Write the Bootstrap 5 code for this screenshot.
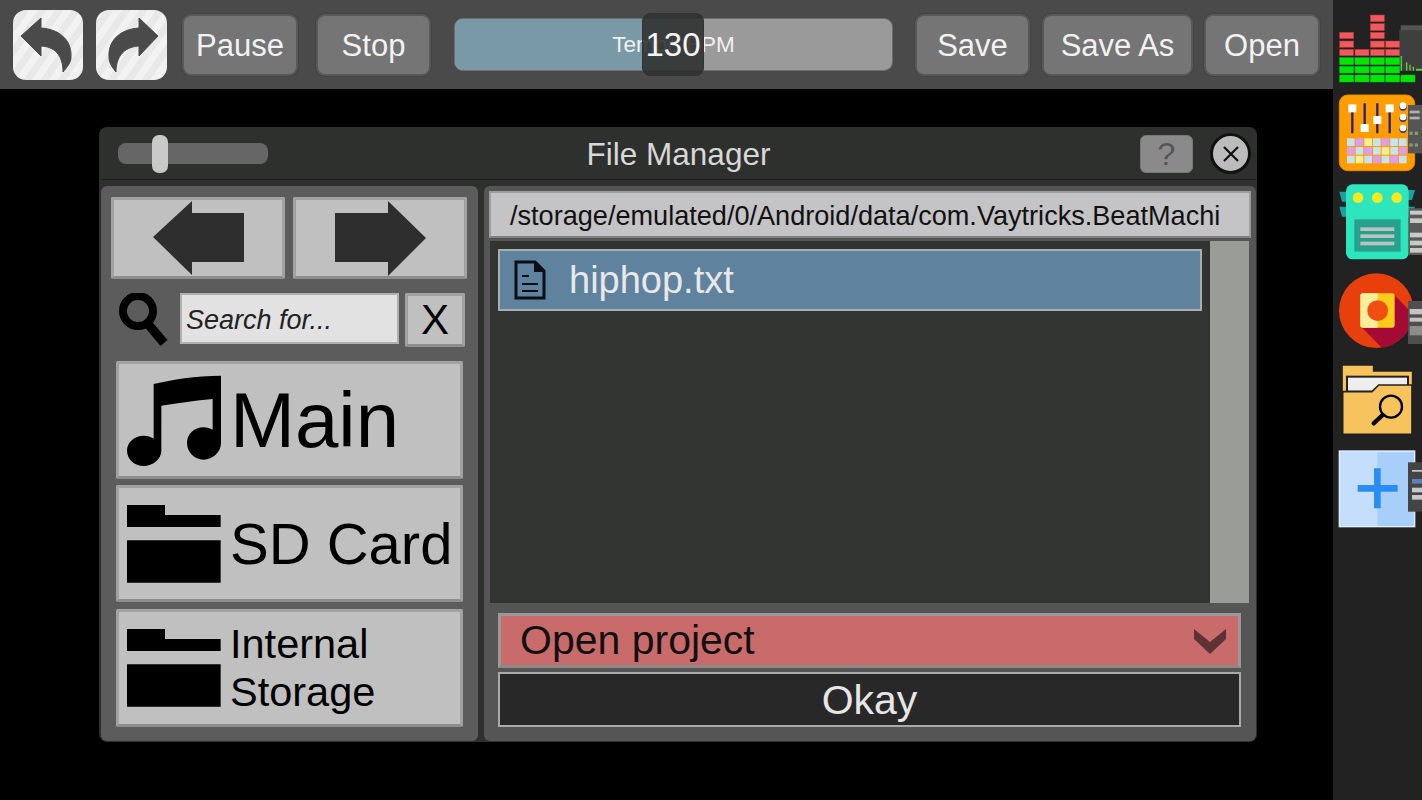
<!DOCTYPE html>
<html lang="en">
<head>
  <meta charset="UTF-8">
  <title>File Manager</title>
  <meta name="viewport" content="width=device-width, initial-scale=1" />
  <link href="https://cdn.jsdelivr.net/npm/bootstrap@5.3.2/dist/css/bootstrap.min.css" rel="stylesheet">
  <style>
    html, body { height: 100%; }
    body { background: #000; font-family: "Liberation Sans", Arial, sans-serif; overflow: hidden; }
    svg { display: block; flex: none; }

    /* top toolbar */
    .app-main { width: 1333px; }
    .toolbar { height: 89px; background: #4a4a4a; padding-left: 13px; }
    .img-btn { width: 70px; height: 70px; padding: 0; border: 0; border-radius: 13px; background: repeating-linear-gradient(-55deg, #e9e9e9 0 7px, #f2f2f2 7px 14px); }
    .img-btn:hover, .img-btn:active { background: repeating-linear-gradient(-55deg, #e9e9e9 0 7px, #f2f2f2 7px 14px) !important; }
    .tool-btn { height: 62px; padding: 2px 0 0; font-size: 31px; line-height: 1; color: #f2f2f2; background: #757575; border: 2px solid #585858; border-radius: 9px; box-shadow: 0 0 0 1px #444; }
    .tool-btn:hover { color: #f2f2f2; background: #757575; border-color: #585858; }
    .w-pause { width: 116px; margin-left: 15px; }
    .w-stop { width: 115px; margin-left: 18px; }
    .w-save { width: 115px; margin-left: 22px; }
    .w-saveas { width: 151px; margin-left: 12px; }
    .w-open { width: 116px; margin-left: 11px; }
    .w-redo { margin-left: 13px; width: 71px; }
    .tempo { width: 439px; height: 53px; margin-left: 23px; background: #9a9a9a; border-radius: 9px; border: 1px solid #6e6e6e; font-size: 22.5px; color: #f0f0f0; }
    .tempo-fill { background: #7899a5; border-radius: 8px 0 0 8px; }
    .tempo-label { z-index: 1; }
    .tempo-thumb { left: 187px; top: -6px; width: 62px; height: 63px; z-index: 2; background: rgba(48, 50, 50, .9); border: 1px solid #333; border-radius: 8px; font-size: 33px; color: #f4f4f4; }

    /* side dock */
    .dock { width: 89px; background: #222; }

    /* dialog */
    .fm-dialog { width: 1158px; height: 615px; margin: 38px 0 0 99px; padding: 0 1px 1px 2px; background: #2e302e; border-radius: 8px; }
    .fm-title { display: grid; grid-template-columns: 1fr auto 1fr; height: 53px; padding: 0 17px; color: #d8d8d8; font-size: 31.5px; border-bottom: 1px solid #222; }
    .fm-title-text { padding-top: 4px; }
    .title-tools { margin: 1px -12px 0 0; gap: 17px; }
    .size-track { width: 150px; height: 21px; background: #666; border-radius: 8px; }
    .size-thumb { left: 34px; top: -8px; width: 16px; height: 38px; background: #c9c9c9; border-radius: 7px; }
    .help-btn { width: 53px; height: 38px; padding: 0; background: #8a8a8a; border: 1px solid #777; border-radius: 6px; color: #555; font-size: 32px; line-height: 1; }
    .close-btn { width: 41px; height: 41px; padding: 0; background: #bcbcbc; border: 3px solid #111; border-radius: 50%; }
    .fm-body { gap: 6px; margin-top: 6px; height: 555px; }
    .pane-left { width: 377px; background: #5c5c5c; border-radius: 6px; padding: 11px 10px 0; }
    .pane-right { width: 772px; background: #555; border-radius: 6px; padding: 5px; }
    .grey-btn { padding: 0; background: #c0c0c0; border: 3px solid #a2a2a2; border-bottom-color: #8e8e8e; border-radius: 2px; color: #000; }
    .grey-btn:hover { background: #c0c0c0; border-color: #a2a2a2; color: #000; }
    .nav-btn { width: 174px; height: 82px; }
    .search-row { margin: 14px 0 14px 8px; height: 54px; }
    .search-input { width: 219px; height: 51px; margin-left: 12px; padding: 4px 4px 0; background: #e2e2e2; border: 2px solid #b0b0b0; border-radius: 0; font-size: 27px; font-style: italic; color: #222; }
    .search-input::placeholder { color: #222; opacity: 1; }
    .clear-btn { width: 60px; height: 54px; margin-left: 6px; font-size: 42px; line-height: 1; }
    .place-list { margin-left: 5px; width: 347px; }
    .place-btn { width: 347px; height: 118px; padding-left: 8px; gap: 9px; text-align: left; }
    .place-sd { height: 117px; margin: 6px 0 7px; font-size: 58px; }
    .place-main { font-size: 78px; }
    .place-int { font-size: 41.5px; line-height: 48px; }
    .path-bar { height: 47px; padding: 1px 19px 0; background: #c4c3c6; border: 2px solid #9e9e9e; border-bottom-color: #808080; font-size: 27.1px; line-height: 43px; color: #111; white-space: nowrap; overflow: hidden; }
    .file-pane { width: 759px; height: 362px; margin: 3px 0 0 1px; background: #323432; }
    .file-col { width: 720px; padding: 8px 8px 0; }
    .list-group-item.file-row { height: 62px; padding: 0 0 0 14px; gap: 23px; background: #5f829e; border: 2px solid #a9aeb0; border-radius: 0; color: #e8e8e8; font-size: 38px; }
    .file-scroll { width: 39px; background: #9a9c98; }
    .mode-select { width: 743px; height: 55px; margin: 10px 0 0 9px; padding: 1px 12px 0 19px; background: #c96b6b; border: 3px solid #999; border-bottom-color: #8f8888; font-size: 41px; color: #111; }
    .okay-btn { width: 743px; height: 55px; margin: 4px 0 0 9px; padding: 2px 0 0; background: #282828; border: 2px solid #aaa; border-radius: 0; font-size: 41px; line-height: 1; color: #e6e6e6; }
    .okay-btn:hover { background: #282828; border-color: #aaa; color: #e6e6e6; }
  </style>
</head>
<body>
  <div class="d-flex vh-100">
    <div class="app-main flex-shrink-0">
      <!-- toolbar -->
      <div class="toolbar d-flex align-items-center">
        <button type="button" class="btn img-btn" aria-label="Undo">
          <svg width="70" height="70" viewBox="13 9 70 70"><path fill="#4a4a4a" stroke="#4a4a4a" stroke-linejoin="round" d="M21 35 41 17V27C58 28 72 38 71 56 71 62 67 66 63 71 63 58 58 46 41 45V55Z"/></svg>
        </button>
        <button type="button" class="btn img-btn w-redo" aria-label="Redo">
          <svg width="71" height="70" viewBox="96 9 71 70"><path fill="#4a4a4a" stroke="#4a4a4a" stroke-linejoin="round" d="M158 35 139 17V27C122 28 108 38 109 56 109 62 112 66 116 71 116 58 122 46 139 45V55Z"/></svg>
        </button>
        <button type="button" class="btn tool-btn w-pause">Pause</button>
        <button type="button" class="btn tool-btn w-stop">Stop</button>
        <div class="tempo position-relative d-flex">
          <div class="tempo-fill h-100" style="width: 49%"></div>
          <div class="tempo-label position-absolute top-0 start-0 w-100 h-100 d-flex align-items-center justify-content-center">Tempo BPM</div>
          <div class="tempo-thumb position-absolute d-flex align-items-center justify-content-center">130</div>
        </div>
        <button type="button" class="btn tool-btn w-save">Save</button>
        <button type="button" class="btn tool-btn w-saveas">Save As</button>
        <button type="button" class="btn tool-btn w-open">Open</button>
      </div>

      <!-- file manager -->
      <div class="fm-dialog">
        <div class="fm-title align-items-center">
          <div class="size-track position-relative"><div class="size-thumb position-absolute"></div></div>
          <div class="fm-title-text">File Manager</div>
          <div class="title-tools d-flex justify-content-end align-items-center">
            <button type="button" class="btn help-btn">?</button>
            <button type="button" class="btn close-btn d-flex align-items-center justify-content-center" aria-label="Close">
              <svg width="20" height="20" viewBox="0 0 20 20"><path d="M3 3 17 17M17 3 3 17" stroke="#111" stroke-width="2.2"/></svg>
            </button>
          </div>
        </div>
        <div class="fm-body d-flex">
          <div class="pane-left">
            <div class="d-flex gap-2">
              <button type="button" class="btn grey-btn nav-btn d-flex align-items-center justify-content-center" aria-label="Back">
                <svg width="91" height="75" viewBox="152 201 91 75"><path fill="#2e2e2e" d="M152 237 191 201V213H243V262H191V275Z"/></svg>
              </button>
              <button type="button" class="btn grey-btn nav-btn d-flex align-items-center justify-content-center" aria-label="Forward">
                <svg width="91" height="75" viewBox="335 201 91 75"><path fill="#2e2e2e" d="M426 238 388 201V213H335V262H388V276Z"/></svg>
              </button>
            </div>
            <div class="search-row d-flex align-items-start">
              <svg width="49" height="54" viewBox="119 292 49 54"><circle cx="138" cy="310" r="15" fill="none" stroke="#000" stroke-width="8"/><path d="M148 323 164 342" stroke="#000" stroke-width="9"/></svg>
              <input type="text" class="form-control search-input" placeholder="Search for...">
              <button type="button" class="btn grey-btn clear-btn">X</button>
            </div>
            <div class="place-list">
              <button type="button" class="btn grey-btn place-btn place-main d-flex align-items-center">
                <svg width="94" height="91" viewBox="95 58 282 273"><path d="M175 85C230 72 300 60 377 60V262C377 290 352 312 325 312 297 312 275 290 275 262 275 235 297 215 325 215 335 215 345 218 352 222V130C300 135 250 142 198 150V285C198 310 172 331 145 331 117 331 95 310 95 285 95 260 117 240 145 240 157 240 167 243 175 249Z"/></svg>
                <span>Main</span>
              </button>
              <button type="button" class="btn grey-btn place-btn place-sd d-flex align-items-center">
                <svg width="94" height="78" viewBox="95 450 282 234"><path d="M95 450H209V480H376V516H95ZM95 556H376V683H95Z"/></svg>
                <span>SD Card</span>
              </button>
              <button type="button" class="btn grey-btn place-btn place-int d-flex align-items-center">
                <svg width="94" height="78" viewBox="95 450 282 234"><path d="M95 450H209V480H376V516H95ZM95 556H376V683H95Z"/></svg>
                <span>Internal<br>Storage</span>
              </button>
            </div>
          </div>
          <div class="pane-right">
            <div class="path-bar">/storage/emulated/0/Android/data/com.Vaytricks.BeatMachi</div>
            <div class="file-pane d-flex">
              <div class="file-col">
                <div class="list-group">
                  <div class="list-group-item file-row d-flex align-items-center">
                    <svg width="32" height="40" viewBox="0 0 32 40"><path d="M2 2H21L30 11V38H2Z" fill="none" stroke="#0b0f14" stroke-width="3"/><path d="M20 1H22L31 10V12H20Z" fill="#0b0f14"/><path d="M8 16H15M8 24H24M8 31H24" stroke="#0b0f14" stroke-width="2"/></svg>
                    <span>hiphop.txt</span>
                  </div>
                </div>
              </div>
              <div class="file-scroll"></div>
            </div>
            <div class="mode-select d-flex align-items-center justify-content-between">
              <span>Open project</span>
              <svg width="32" height="26" viewBox="0 0 32 26"><path fill="#5e3235" d="M0 1 16 14 32 1V11L16 26 0 11Z"/></svg>
            </div>
            <button type="button" class="btn okay-btn d-block">Okay</button>
          </div>
        </div>
      </div>
    </div>

    <!-- side dock -->
    <div class="dock d-flex flex-column flex-shrink-0">
      <svg width="89" height="90" viewBox="33 0 267 270">
        <rect x="232" y="90" width="68" height="122" fill="#3f3f3f"/><rect x="236" y="76" width="64" height="14" fill="#555"/>
        <path d="M236 212V168h4v44zM252 212v-25h4v25zM262 212v-18h4v18zM272 212v-12h4v12zM282 212v-6h18v6z" fill="#5bd03a"/>
        <g fill="#00e800" stroke="#0b3" stroke-width="1.5"><rect x="53" y="173" width="42" height="21"/><rect x="99" y="173" width="42" height="21"/><rect x="145" y="173" width="42" height="21"/><rect x="191" y="173" width="42" height="21"/><rect x="53" y="199" width="42" height="20"/><rect x="99" y="199" width="42" height="20"/><rect x="145" y="199" width="42" height="20"/><rect x="191" y="199" width="42" height="20"/><rect x="53" y="225" width="42" height="21"/><rect x="99" y="225" width="42" height="21"/><rect x="145" y="225" width="42" height="21"/><rect x="191" y="225" width="42" height="21"/><rect x="237" y="225" width="42" height="21"/></g>
        <g fill="#ef5a5e" stroke="#b33" stroke-width="1.5"><rect x="53" y="148" width="42" height="19"/><rect x="53" y="123" width="42" height="19"/><rect x="53" y="97" width="42" height="19"/><rect x="99" y="148" width="42" height="19"/><rect x="145" y="148" width="42" height="19"/><rect x="145" y="123" width="42" height="19"/><rect x="145" y="97" width="42" height="19"/><rect x="145" y="71" width="42" height="21"/><rect x="145" y="45" width="42" height="20"/><rect x="191" y="148" width="42" height="19"/><rect x="191" y="123" width="42" height="19"/></g>
      </svg>
      <svg width="89" height="88" viewBox="33 270 267 264">
        <rect x="52" y="285" width="226" height="227" rx="25" fill="#ff9d00" stroke="#e88a00" stroke-width="3"/>
        <path d="M91 325V400M128 310V385M166 310V400M203 325V400" stroke="#26208c" stroke-width="7"/>
        <g fill="#fff"><rect x="79" y="313" width="24" height="24"/><rect x="116" y="372" width="24" height="24"/><rect x="154" y="348" width="24" height="24"/><rect x="191" y="313" width="24" height="24"/></g>
        <g fill="#35308f"><circle cx="243" cy="321" r="11"/><circle cx="243" cy="355" r="11"/><circle cx="243" cy="388" r="11"/></g>
        <g fill="#fff"><circle cx="243" cy="317" r="10"/><circle cx="243" cy="351" r="10"/><circle cx="243" cy="384" r="10"/></g>
        <g fill="#c4e4f2"><rect x="75" y="415" width="23" height="23"/><rect x="153" y="415" width="23" height="23"/><rect x="205" y="415" width="23" height="23"/><rect x="101" y="441" width="23" height="23"/><rect x="153" y="441" width="23" height="23"/><rect x="205" y="441" width="23" height="23"/><rect x="75" y="467" width="23" height="23"/><rect x="127" y="467" width="23" height="23"/><rect x="179" y="467" width="23" height="23"/><rect x="231" y="415" width="23" height="23"/><rect x="231" y="467" width="23" height="23"/></g>
        <g fill="#df9df2"><rect x="101" y="415" width="23" height="23"/><rect x="179" y="415" width="23" height="23"/><rect x="75" y="441" width="23" height="23"/><rect x="127" y="441" width="23" height="23"/><rect x="231" y="441" width="23" height="23"/><rect x="153" y="467" width="23" height="23"/><rect x="205" y="467" width="23" height="23"/></g>
        <g fill="#f6f08a"><rect x="127" y="415" width="23" height="23"/><rect x="179" y="441" width="23" height="23"/><rect x="101" y="467" width="23" height="23"/></g>
        <rect x="258" y="315" width="42" height="145" fill="#555"/>
        <g fill="#b0b0b0"><rect x="263" y="332" width="30" height="8"/><rect x="263" y="350" width="30" height="8"/></g>
        <g fill="#839a6e"><rect x="262" y="395" width="10" height="10"/><rect x="278" y="395" width="10" height="10"/><rect x="262" y="430" width="10" height="10"/><rect x="278" y="430" width="10" height="10"/></g>
      </svg>
      <svg width="89" height="90" viewBox="33 534 267 270">
        <path d="M52 575H76V605H60ZM52 620H76V650H60ZM258 570H279L270 600H258ZM258 620H279L270 650H258Z" fill="#1c9fa0"/>
        <rect x="72" y="553" width="188" height="225" rx="20" fill="#2ee6bd"/>
        <g fill="#f0ea1e"><circle cx="108" cy="593" r="16"/><circle cx="166" cy="593" r="16"/><circle cx="224" cy="593" r="16"/></g>
        <rect x="97" y="658" width="139" height="97" fill="#27a08e"/>
        <g fill="#b9c4bd"><rect x="115" y="682" width="102" height="11"/><rect x="115" y="703" width="102" height="11"/><rect x="115" y="725" width="102" height="11"/></g>
        <rect x="260" y="625" width="40" height="140" fill="#5a5a5a"/>
        <g fill="#c6cbc6"><rect x="264" y="632" width="36" height="12"/><rect x="264" y="655" width="36" height="14"/><rect x="264" y="698" width="36" height="14"/><rect x="264" y="722" width="36" height="14"/><rect x="264" y="744" width="36" height="14"/></g>
      </svg>
      <svg width="89" height="90" viewBox="33 9 267 270">
        <clipPath id="disc"><circle cx="163" cy="137" r="112"/></clipPath>
        <circle cx="163" cy="137" r="112" fill="#e8400c"/>
        <path clip-path="url(#disc)" d="M215 88 300 175 200 270 118 185Z" fill="#a50a35"/>
        <rect x="115" y="85" width="103" height="103" rx="8" fill="#ffcc1a"/>
        <path d="M167 85H123a8 8 0 0 0-8 8v87a8 8 0 0 0 8 8H167Z" fill="#ffef9c"/>
        <circle cx="167" cy="137" r="31" fill="#f04e12"/>
        <rect x="258" y="108" width="42" height="129" fill="#4f4f4f"/>
        <g fill="#c4c4c4"><rect x="263" y="132" width="37" height="16"/><rect x="263" y="158" width="37" height="12"/></g>
        <rect x="263" y="183" width="37" height="28" fill="#8c8c8c"/>
      </svg>
      <svg width="89" height="85" viewBox="33 279 267 255">
        <path d="M60 300H155V318H272V508H60Z" fill="#f7c35c" stroke="#222" stroke-width="5"/>
        <rect x="75" y="335" width="183" height="45" fill="#eee" stroke="#222" stroke-width="6"/>
        <path d="M62 380H150L170 360H270V508H62Z" fill="#f7c35c" stroke="#222" stroke-width="5"/>
        <circle cx="207" cy="425" r="33" fill="none" stroke="#000" stroke-width="7"/>
        <path d="M182 450 155 475" stroke="#000" stroke-width="13" stroke-linecap="round"/>
      </svg>
      <svg width="89" height="90" viewBox="33 534 267 270">
        <rect x="52" y="558" width="226" height="227" fill="#c5defc" stroke="#e4effd" stroke-width="4"/>
        <rect x="166" y="562" width="110" height="221" fill="#a8cffa"/>
        <path d="M107 660H156V610H176V660H227V680H176V730H156V680H107Z" fill="#2a8cf5"/>
        <rect x="258" y="592" width="42" height="148" fill="#444"/>
        <g fill="#c9c9c9"><rect x="270" y="615" width="30" height="5"/><rect x="270" y="668" width="30" height="14"/><rect x="270" y="690" width="30" height="14"/></g>
        <rect x="270" y="642" width="30" height="14" fill="#5f7fb5"/>
      </svg>
    </div>
  </div>

  <script src="https://cdn.jsdelivr.net/npm/bootstrap@5.3.2/dist/js/bootstrap.bundle.min.js"></script>
</body>
</html>
